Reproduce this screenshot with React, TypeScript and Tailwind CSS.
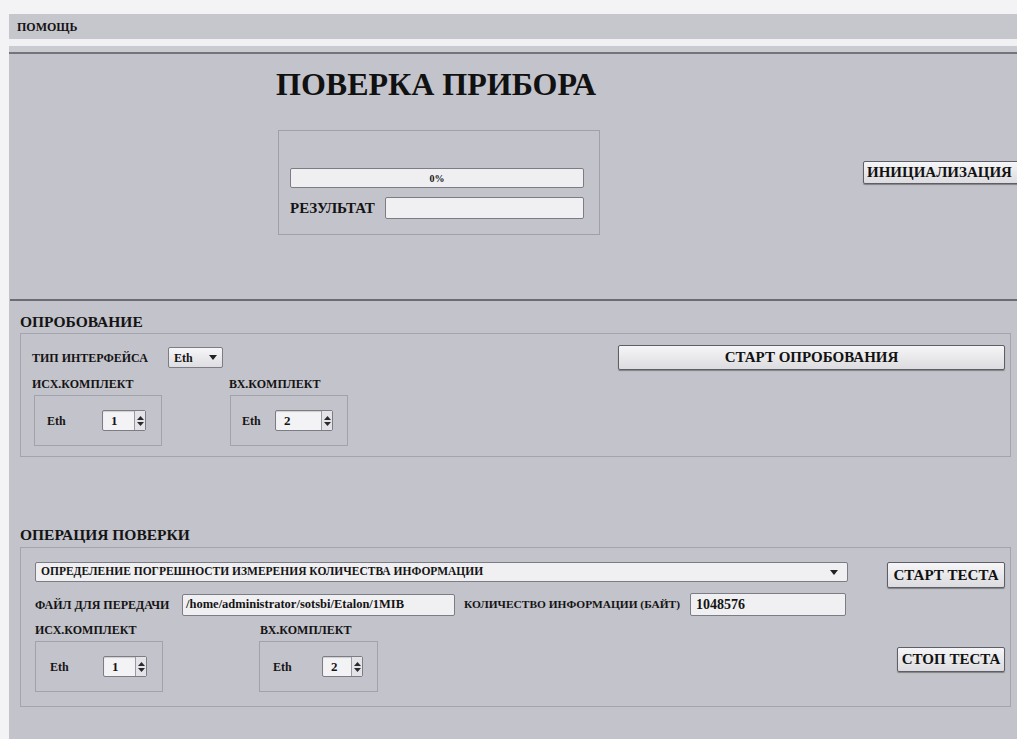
import React from 'react';

const serif = "font-['Liberation_Serif','DejaVu_Serif',serif]";

// Small up/down arrow pair used by the spin boxes
const SpinArrows = () => (
  <div className="flex flex-col items-center justify-center w-[11px] h-full border-l border-[#9a9aa2] bg-[#e4e4e8] gap-[2px]">
    <svg width="7" height="4" viewBox="0 0 7 4"><path d="M0 4 L3.5 0 L7 4 Z" fill="#2a2a2e" /></svg>
    <svg width="7" height="4" viewBox="0 0 7 4"><path d="M0 0 L3.5 4 L7 0 Z" fill="#2a2a2e" /></svg>
  </div>
);

const DownArrow = () => (
  <svg width="8" height="5" viewBox="0 0 8 5"><path d="M0 0 L4 5 L8 0 Z" fill="#222226" /></svg>
);

interface SpinProps {
  value: number;
  width: number;
}

const SpinBox: React.FC<SpinProps> = ({ value, width }) => (
  <div
    className="flex items-stretch h-[21px] border border-[#7c7c84] rounded-[2px] bg-[#f3f3f5] shadow-[inset_0_1px_1px_rgba(0,0,0,0.15)]"
    style={{ width }}
  >
    <div className="flex-1 flex items-center pl-[8px] text-[13px] font-bold text-[#151515]">{value}</div>
    <SpinArrows />
  </div>
);

interface SubBoxProps {
  width: number;
  padLeft: number;
  spinGap: number;
  spinWidth: number;
  value: number;
}

// Framed group holding the "Eth" label and its port number
const SubBox: React.FC<SubBoxProps> = ({ width, padLeft, spinGap, spinWidth, value }) => (
  <div
    className="flex items-center h-[51px] border border-[#a2a2aa]"
    style={{ width, paddingLeft: padLeft }}
  >
    <span className="text-[12px] font-bold text-[#151515]" style={{ width: spinGap }}>Eth</span>
    <SpinBox value={value} width={spinWidth} />
  </div>
);

const Button: React.FC<{ children: React.ReactNode; className?: string }> = ({ children, className = '' }) => (
  <button
    className={`flex items-center justify-center border border-[#5e5e66] rounded-[2px] bg-gradient-to-b from-[#f6f6f8] to-[#dcdce0] shadow-[0_1px_1px_rgba(0,0,0,0.35)] text-[15px] font-bold text-[#121212] whitespace-nowrap ${className}`}
  >
    {children}
  </button>
);

export default function App() {
  return (
    <div className={`w-[1017px] h-[739px] overflow-hidden bg-[#f3f3f5] flex flex-col ${serif}`}>
      {/* white strip above the window */}
      <div className="h-[14px] shrink-0" />

      <div className="flex-1 flex">
        <div className="w-[9px] shrink-0 bg-[#f3f3f5]" />

        <div className="flex-1 flex flex-col bg-[#c3c3cb] text-[#141414]">
          {/* menu bar */}
          <div className="h-[25px] flex items-center pl-[8px] bg-[#c6c6cd]">
            <span className="text-[12px] font-bold">ПОМОЩЬ</span>
          </div>
          <div className="h-[7px] bg-[#f1f1f4]" />
          <div className="h-[6px] bg-[#cacad1]" />
          <div className="h-[2px] bg-[#74747e]" />

          {/* header: title, progress, init button */}
          <div className="h-[245px] flex">
            <div className="ml-[267px] w-[325px] flex flex-col">
              <h1 className="mt-[13px] h-[34px] leading-[34px] text-[32px] font-bold text-[#111] whitespace-nowrap">
                ПОВЕРКА ПРИБОРА
              </h1>
              <div className="mt-[29px] ml-[2px] w-[322px] h-[105px] border border-[#a0a0a8] pl-[11px] pt-[37px]">
                <div className="w-[294px] h-[20px] border border-[#7c7c84] rounded-[2px] bg-[#efeff2] flex items-center justify-center text-[10px] font-bold">
                  0%
                </div>
                <div className="mt-[9px] flex items-center">
                  <span className="w-[95px] text-[15px] font-bold whitespace-nowrap">РЕЗУЛЬТАТ</span>
                  <div className="w-[199px] h-[22px] border border-[#7c7c84] rounded-[2px] bg-[#f0f0f3]" />
                </div>
              </div>
            </div>
            <div className="ml-[262px] mt-[107px]">
              <Button className="w-[160px] h-[23px] justify-start pl-[3px]">ИНИЦИАЛИЗАЦИЯ</Button>
            </div>
          </div>
          <div className="h-[2px] ml-[1px] bg-[#6c6c76]" />

          {/* trial run */}
          <div className="mt-[12px] ml-[11px] h-[18px] leading-[18px] text-[15.5px] font-bold">ОПРОБОВАНИЕ</div>
          <div className="mt-[2px] ml-[11px] w-[991px] h-[124px] border border-[#a4a4ac] pl-[11px] pr-[5px] pt-[11px]">
            <div className="flex items-center h-[25px]">
              <span className="w-[136px] text-[12px] font-bold whitespace-nowrap">ТИП ИНТЕРФЕЙСА</span>
              <div className="w-[55px] h-[21px] border border-[#7c7c84] rounded-[2px] bg-gradient-to-b from-[#f6f6f8] to-[#dedee2] flex items-center justify-between px-[5px]">
                <span className="text-[12px] font-bold">Eth</span>
                <DownArrow />
              </div>
              <Button className="ml-auto w-[387px] h-[25px]">СТАРТ ОПРОБОВАНИЯ</Button>
            </div>
            <div className="mt-[8px] flex">
              <div className="flex flex-col w-[130px]">
                <span className="h-[12px] leading-[12px] text-[12px] font-bold whitespace-nowrap">ИСХ.КОМПЛЕКТ</span>
                <div className="mt-[5px] ml-[2px]">
                  <SubBox width={128} padLeft={12} spinGap={55} spinWidth={44} value={1} />
                </div>
              </div>
              <div className="flex flex-col ml-[67px]">
                <span className="h-[12px] leading-[12px] text-[12px] font-bold whitespace-nowrap">ВХ.КОМПЛЕКТ</span>
                <div className="mt-[5px] ml-[1px]">
                  <SubBox width={118} padLeft={11} spinGap={33} spinWidth={58} value={2} />
                </div>
              </div>
            </div>
          </div>

          {/* verification operation */}
          <div className="mt-[69px] ml-[11px] h-[18px] leading-[18px] text-[15.5px] font-bold">ОПЕРАЦИЯ ПОВЕРКИ</div>
          <div className="mt-[3px] ml-[11px] w-[991px] h-[160px] border border-[#a4a4ac] pl-[14px] pr-[5px] pt-[14px] flex">
            <div className="flex flex-col">
              <div className="w-[813px] h-[20px] border border-[#7c7c84] rounded-[2px] bg-[#f0f0f3] flex items-center justify-between pl-[5px] pr-[9px]">
                <span className="text-[11.5px] font-bold whitespace-nowrap">
                  ОПРЕДЕЛЕНИЕ ПОГРЕШНОСТИ ИЗМЕРЕНИЯ КОЛИЧЕСТВА ИНФОРМАЦИИ
                </span>
                <DownArrow />
              </div>
              <div className="mt-[11px] flex items-center h-[23px]">
                <span className="w-[147px] text-[12px] font-bold whitespace-nowrap">ФАЙЛ ДЛЯ ПЕРЕДАЧИ</span>
                <div className="w-[273px] h-[22px] border border-[#7c7c84] rounded-[2px] bg-[#f0f0f3] flex items-center pl-[3px] text-[12.5px] font-bold whitespace-nowrap overflow-hidden">
                  /home/administrator/sotsbi/Etalon/1MIB
                </div>
                <span className="ml-[9px] w-[226px] text-[11.4px] font-bold whitespace-nowrap">КОЛИЧЕСТВО ИНФОРМАЦИИ (БАЙТ)</span>
                <div className="w-[156px] h-[23px] border border-[#7c7c84] rounded-[2px] bg-[#f0f0f3] flex items-center pl-[5px] text-[14px] font-bold">
                  1048576
                </div>
              </div>
              <div className="mt-[8px] flex">
                <div className="flex flex-col w-[128px]">
                  <span className="h-[12px] leading-[12px] text-[12px] font-bold whitespace-nowrap">ИСХ.КОМПЛЕКТ</span>
                  <div className="mt-[5px]">
                    <SubBox width={128} padLeft={14} spinGap={53} spinWidth={44} value={1} />
                  </div>
                </div>
                <div className="flex flex-col ml-[97px]">
                  <span className="h-[12px] leading-[12px] text-[12px] font-bold whitespace-nowrap">ВХ.КОМПЛЕКТ</span>
                  <div className="mt-[5px] -ml-[1px]">
                    <SubBox width={119} padLeft={13} spinGap={49} spinWidth={41} value={2} />
                  </div>
                </div>
              </div>
            </div>
            <div className="ml-auto flex flex-col items-end">
              <Button className="w-[118px] h-[26px]">СТАРТ ТЕСТА</Button>
              <Button className="mt-[59px] w-[108px] h-[25px]">СТОП ТЕСТА</Button>
            </div>
          </div>
        </div>
      </div>
    </div>
  );
}
